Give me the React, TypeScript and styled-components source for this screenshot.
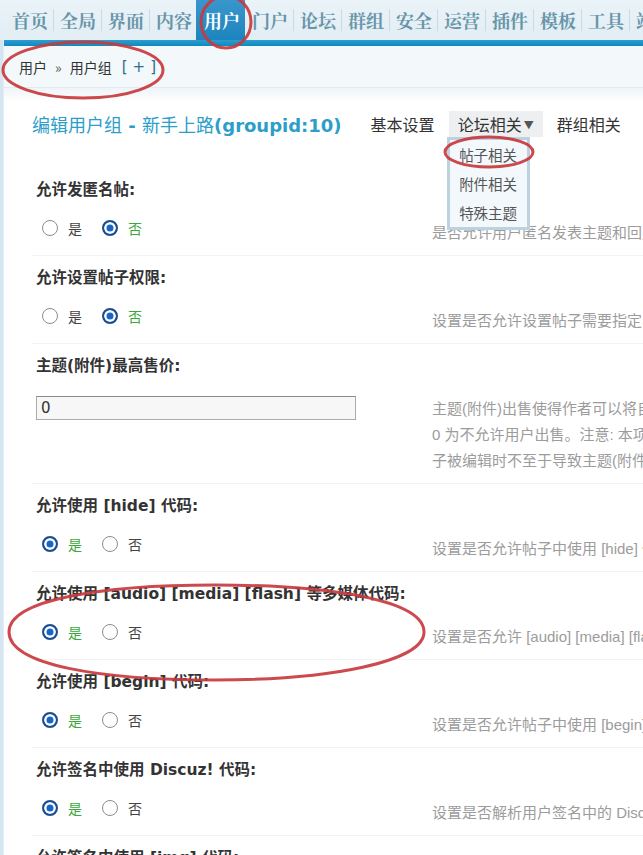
import React from "react";
import styled, { createGlobalStyle } from "styled-components";

const GlobalStyle = createGlobalStyle`
  html, body {
    margin: 0;
    padding: 0;
    width: 643px;
    height: 855px;
    overflow: hidden;
    background: #ffffff;
  }
  body {
    font-family: "DejaVu Sans", "Noto Sans CJK SC", sans-serif;
    color: #333;
  }
`;

const Page = styled.div`
  position: relative;
  width: 643px;
  height: 855px;
  overflow: hidden;
  display: flex;
  flex-direction: column;
`;

const TopNav = styled.nav`
  display: flex;
  align-items: center;
  height: 40px;
  padding-left: 6px;
  background: linear-gradient(#eaf3f8, #e2edf4);
  white-space: nowrap;
  flex: none;
`;

const NavTab = styled.div<{ $active?: boolean }>`
  flex: none;
  height: 40px;
  display: flex;
  align-items: center;
  padding: 0 5px 0 6px;
  font-family: "Noto Serif CJK SC", "Noto Sans CJK SC", serif;
  font-size: 18px;
  font-weight: 700;
  color: ${(p) => (p.$active ? "#ffffff" : "#6896a9")};
  background: ${(p) =>
    p.$active ? "linear-gradient(#3a96cc, #1c84bf)" : "transparent"};
  margin-left: ${(p) => (p.$active ? "-2px" : "0")};
  padding-left: ${(p) => (p.$active ? "8px" : "6px")};
`;

const NavSep = styled.span<{ $hidden?: boolean }>`
  flex: none;
  width: 1px;
  height: 22px;
  background: ${(p) => (p.$hidden ? "transparent" : "#c9dbe5")};
`;

const Body = styled.div`
  flex: 1;
  display: flex;
  min-height: 0;
`;

const SideStrip = styled.div`
  flex: none;
  width: 4px;
  background: #d4e6f1;
  border-right: 1px solid #e4eef4;
  box-sizing: border-box;
`;

const Main = styled.div`
  flex: 1;
  display: flex;
  flex-direction: column;
  min-width: 0;
`;

const BlueBar = styled.div`
  height: 6px;
  flex: none;
  background: linear-gradient(#2e9ccf, #0e8ac0);
`;

const Crumbs = styled.div`
  height: 41px;
  flex: none;
  display: flex;
  align-items: center;
  padding-left: 15px;
  background: #f3f8fb;
  border-bottom: 1px solid #e0eaf0;
  font-family: "Noto Sans CJK SC", sans-serif;
  font-size: 14px;
  color: #333;
`;

const CrumbArrow = styled.span`
  margin: 0 8px 0 8px;
  font-size: 14px;
  color: #555;
`;

const CrumbAdd = styled.span`
  margin-left: 10px;
  font-family: "DejaVu Sans", sans-serif;
  font-size: 15px;
  letter-spacing: 5px;
  color: #2f6d8c;
`;

const Content = styled.div`
  flex: 1;
  background: linear-gradient(#eef4f7 0, #ffffff 14px);
  padding-left: 28px;
`;

const Header = styled.div`
  display: flex;
  align-items: center;
  height: 26px;
  margin: 23px 0 31px 0;
  white-space: nowrap;
`;

const Title = styled.h1`
  margin: 0;
  font-family: "DejaVu Sans", "Noto Sans CJK SC", sans-serif;
  font-size: 18px;
  font-weight: 400;
  color: #2c9ec9;
`;

const TitleStrong = styled.b`
  font-weight: 700;
`;

const TabBar = styled.div`
  display: flex;
  gap: 5px;
  margin-left: 20px;
  height: 26px;
`;

const Tab = styled.div<{ $open?: boolean }>`
  position: relative;
  display: flex;
  align-items: center;
  padding: 0 9px;
  font-family: "Noto Sans CJK SC", sans-serif;
  font-size: 16px;
  color: #333;
  background: ${(p) => (p.$open ? "#edeff1" : "transparent")};
`;

const Caret = styled.span`
  margin-left: 2px;
  font-size: 10px;
  color: #555;
`;

const Menu = styled.div`
  position: absolute;
  top: 100%;
  left: -2px;
  width: 83px;
  box-sizing: border-box;
  border: 3px solid #bcd3df;
  background: #f2f8fc;
  z-index: 5;
`;

const MenuItem = styled.div`
  height: 29px;
  line-height: 29px;
  text-align: center;
  font-family: "Noto Sans CJK SC", sans-serif;
  font-size: 14.5px;
  color: #555;
`;

const Rows = styled.div`
  display: flex;
  flex-direction: column;
`;

const Row = styled.div`
  border-bottom: 1px solid #f1f3f4;
  white-space: nowrap;
`;

const Label = styled.div`
  padding: 11px 0 0 4px;
  line-height: 22px;
  font-family: "DejaVu Sans", "Noto Sans CJK SC", sans-serif;
  font-size: 15.5px;
  font-weight: 700;
  color: #333;
`;

const Control = styled.div`
  display: flex;
  padding: 14px 0 9px 0;
`;

const Field = styled.div`
  flex: none;
  width: 400px;
  box-sizing: border-box;
  padding-left: 4px;
`;

const RadioGroup = styled.div`
  display: flex;
  align-items: center;
  height: 26px;
  padding-left: 6px;
`;

const RadioOption = styled.label<{ $checked?: boolean }>`
  display: inline-flex;
  align-items: center;
  gap: 10px;
  margin-right: 20px;
  font-family: "Noto Sans CJK SC", sans-serif;
  font-size: 14px;
  color: ${(p) => (p.$checked ? "#3aa83a" : "#444")};
`;

const RadioDot = styled.span<{ $checked?: boolean }>`
  width: 16px;
  height: 16px;
  box-sizing: border-box;
  border-radius: 50%;
  border: ${(p) => (p.$checked ? "2px solid #1c4d8e" : "1.5px solid #8c8c8c")};
  background: ${(p) => (p.$checked ? "#1766c6" : "#ffffff")};
  box-shadow: ${(p) => (p.$checked ? "inset 0 0 0 2.5px #ffffff" : "none")};
`;

const TextInput = styled.div`
  margin-top: 5px;
  width: 320px;
  height: 24px;
  box-sizing: border-box;
  border: 1px solid #acacac;
  border-top-color: #8a8a8a;
  background: #f7f7f7;
  padding-left: 4px;
  display: flex;
  align-items: center;
  font-family: "DejaVu Sans", sans-serif;
  font-size: 15px;
  color: #333;
`;

const Desc = styled.div`
  padding-top: 5px;
  line-height: 26px;
  font-family: "Liberation Sans", "Noto Sans CJK SC", sans-serif;
  font-size: 15px;
  color: #9c9c9c;
  white-space: nowrap;
`;

const Marks = styled.svg`
  position: absolute;
  left: 0;
  top: 0;
  width: 643px;
  height: 855px;
  pointer-events: none;
  z-index: 20;
`;

const navItems = [
  "首页", "全局", "界面", "内容", "用户", "门户", "论坛", "群组",
  "安全", "运营", "插件", "模板", "工具", "站长",
];

type Setting =
  | { kind: "radio"; label: string; yes: boolean; desc: string }
  | { kind: "input"; label: string; value: string; desc: string[] };

const settings: Setting[] = [
  { kind: "radio", label: "允许发匿名帖:", yes: false, desc: "是否允许用户匿名发表主题和回复，只要用户组或本论坛允许" },
  { kind: "radio", label: "允许设置帖子权限:", yes: false, desc: "设置是否允许设置帖子需要指定阅读权限才可浏览" },
  {
    kind: "input",
    label: "主题(附件)最高售价:",
    value: "0",
    desc: [
      "主题(附件)出售使得作者可以将自己发表的主题(附件)随帖子出售，此处设置最高售价，",
      "0 为不允许用户出售。注意: 本项设置只是售价的上限，以便帖",
      "子被编辑时不至于导致主题(附件)售价超出范围",
    ],
  },
  { kind: "radio", label: "允许使用 [hide] 代码:", yes: true, desc: "设置是否允许帖子中使用 [hide] 代码" },
  { kind: "radio", label: "允许使用 [audio] [media] [flash] 等多媒体代码:", yes: true, desc: "设置是否允许 [audio] [media] [flash] 等多媒体代码" },
  { kind: "radio", label: "允许使用 [begin] 代码:", yes: true, desc: "设置是否允许帖子中使用 [begin] 代码" },
  { kind: "radio", label: "允许签名中使用 Discuz! 代码:", yes: true, desc: "设置是否解析用户签名中的 Discuz! 代码" },
  { kind: "radio", label: "允许签名中使用 [img] 代码:", yes: true, desc: "设置是否解析用户签名中的 [img] 代码" },
];

function YesNo({ yes }: { yes: boolean }) {
  return (
    <RadioGroup>
      <RadioOption $checked={yes}>
        <RadioDot $checked={yes} />
        是
      </RadioOption>
      <RadioOption $checked={!yes}>
        <RadioDot $checked={!yes} />
        否
      </RadioOption>
    </RadioGroup>
  );
}

export default function App() {
  const activeIndex = 4;
  return (
    <Page>
      <GlobalStyle />
      <TopNav>
        {navItems.map((n, i) => (
          <React.Fragment key={n}>
            <NavTab $active={i === activeIndex}>{n}</NavTab>
            {i < navItems.length - 1 && <NavSep $hidden={i === activeIndex} />}
          </React.Fragment>
        ))}
      </TopNav>
      <Body>
        <SideStrip />
        <Main>
          <BlueBar />
          <Crumbs>
            用户<CrumbArrow>»</CrumbArrow>用户组<CrumbAdd>[+]</CrumbAdd>
          </Crumbs>
          <Content>
            <Header>
              <Title>
                编辑用户组<TitleStrong> - </TitleStrong>新手上路<TitleStrong>(groupid:10)</TitleStrong>
              </Title>
              <TabBar>
                <Tab>基本设置</Tab>
                <Tab $open>
                  论坛相关<Caret>▼</Caret>
                  <Menu>
                    <MenuItem>帖子相关</MenuItem>
                    <MenuItem>附件相关</MenuItem>
                    <MenuItem>特殊主题</MenuItem>
                  </Menu>
                </Tab>
                <Tab>群组相关</Tab>
              </TabBar>
            </Header>
            <Rows>
              {settings.map((s) => (
                <Row key={s.label}>
                  <Label>{s.label}</Label>
                  <Control>
                    <Field>
                      {s.kind === "radio" ? (
                        <YesNo yes={s.yes} />
                      ) : (
                        <TextInput>{s.value}</TextInput>
                      )}
                    </Field>
                    <Desc>
                      {s.kind === "radio"
                        ? s.desc
                        : s.desc.map((line) => <div key={line}>{line}</div>)}
                    </Desc>
                  </Control>
                </Row>
              ))}
            </Rows>
          </Content>
        </Main>
      </Body>
      <Marks viewBox="0 0 643 855">
        <g fill="none" stroke="#c83a3e" strokeWidth="3" strokeLinecap="round" opacity="0.92">
          <ellipse cx="226" cy="22" rx="25" ry="26" />
          <ellipse cx="83" cy="70" rx="80" ry="28" />
          <ellipse cx="489" cy="152" rx="44" ry="15" />
          <path d="M 215 585 C 330 585, 424 600, 424 632 C 424 662, 330 680, 215 680 C 100 680, 9 665, 9 632 C 9 600, 100 585, 215 585 Z" />
        </g>
      </Marks>
    </Page>
  );
}
